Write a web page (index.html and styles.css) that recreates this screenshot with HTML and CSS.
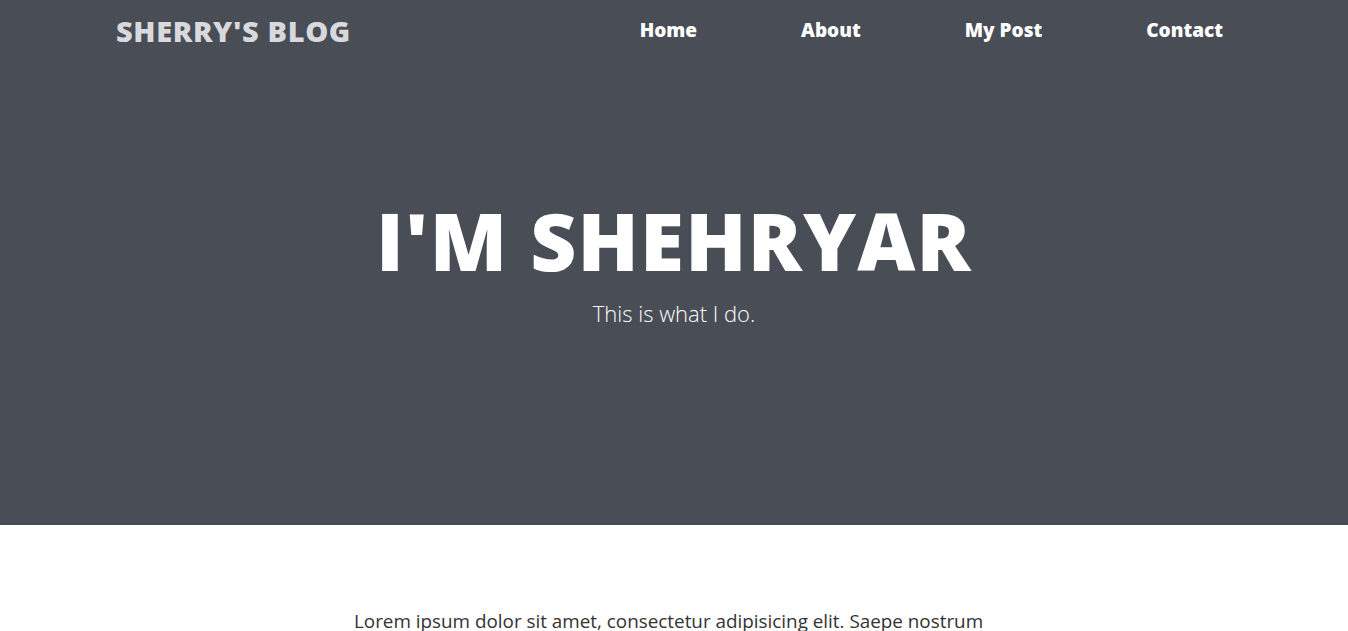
FILE: index.html
```html
<!DOCTYPE html>
<html lang="en">
<head>
<meta charset="utf-8">
<title>Sherry's Blog</title>
<link rel="stylesheet" href="styles.css">
</head>
<body>
<header class="hero">
  <nav class="navbar">
    <a class="brand" href="#">SHERRY'S BLOG</a>
    <ul class="nav-links">
      <li><a href="#">Home</a></li>
      <li><a href="#">About</a></li>
      <li><a href="#">My Post</a></li>
      <li><a href="#">Contact</a></li>
    </ul>
  </nav>
  <div class="hero-text">
    <h1 class="hero-title">I'M SHEHRYAR</h1>
    <p class="hero-sub">This is what I do.</p>
  </div>
</header>
<main class="content">
  <p class="lead">Lorem ipsum dolor sit amet, consectetur adipisicing elit. Saepe nostrum quibusdam, eos officiis fugiat dolorum neque laboriosam reprehenderit voluptatibus vero.</p>
</main>
</body>
</html>
```

FILE: styles.css
```css
* { box-sizing: border-box; }
html, body { margin: 0; padding: 0; }
body {
  font-family: "Open Sans", "Noto Sans", sans-serif;
  color: #333;
  background: #fff;
}
.hero {
  background: #494d56;
  height: 525px;
  display: flex;
  flex-direction: column;
}
.navbar {
  display: flex;
  justify-content: space-between;
  align-items: center;
  height: 60px;
  padding: 0 125px 0 116px;
}
.brand {
  color: #d8d9dc;
  text-decoration: none;
  font-weight: 800;
  font-size: 29px;
  letter-spacing: 0.6px;
}
.nav-links {
  list-style: none;
  display: flex;
  gap: 104px;
  margin: 0;
  padding: 0;
}
.nav-links a {
  color: #fff;
  text-decoration: none;
  font-weight: 800;
  font-size: 19px;
}
.hero-text {
  text-align: center;
  color: #fff;
  padding-top: 140px;
}
.hero-title {
  margin: 0;
  font-size: 80px;
  font-weight: 800;
  line-height: 1;
  letter-spacing: 1.2px;
}
.hero-sub {
  margin: 18px 0 0;
  font-size: 22px;
  font-weight: 300;
}
.content {
  max-width: 640px;
  margin: 0 auto;
  padding-top: 82px;
}
.lead {
  margin: 0;
  font-size: 18.85px;
  line-height: 1.5;
}
```
